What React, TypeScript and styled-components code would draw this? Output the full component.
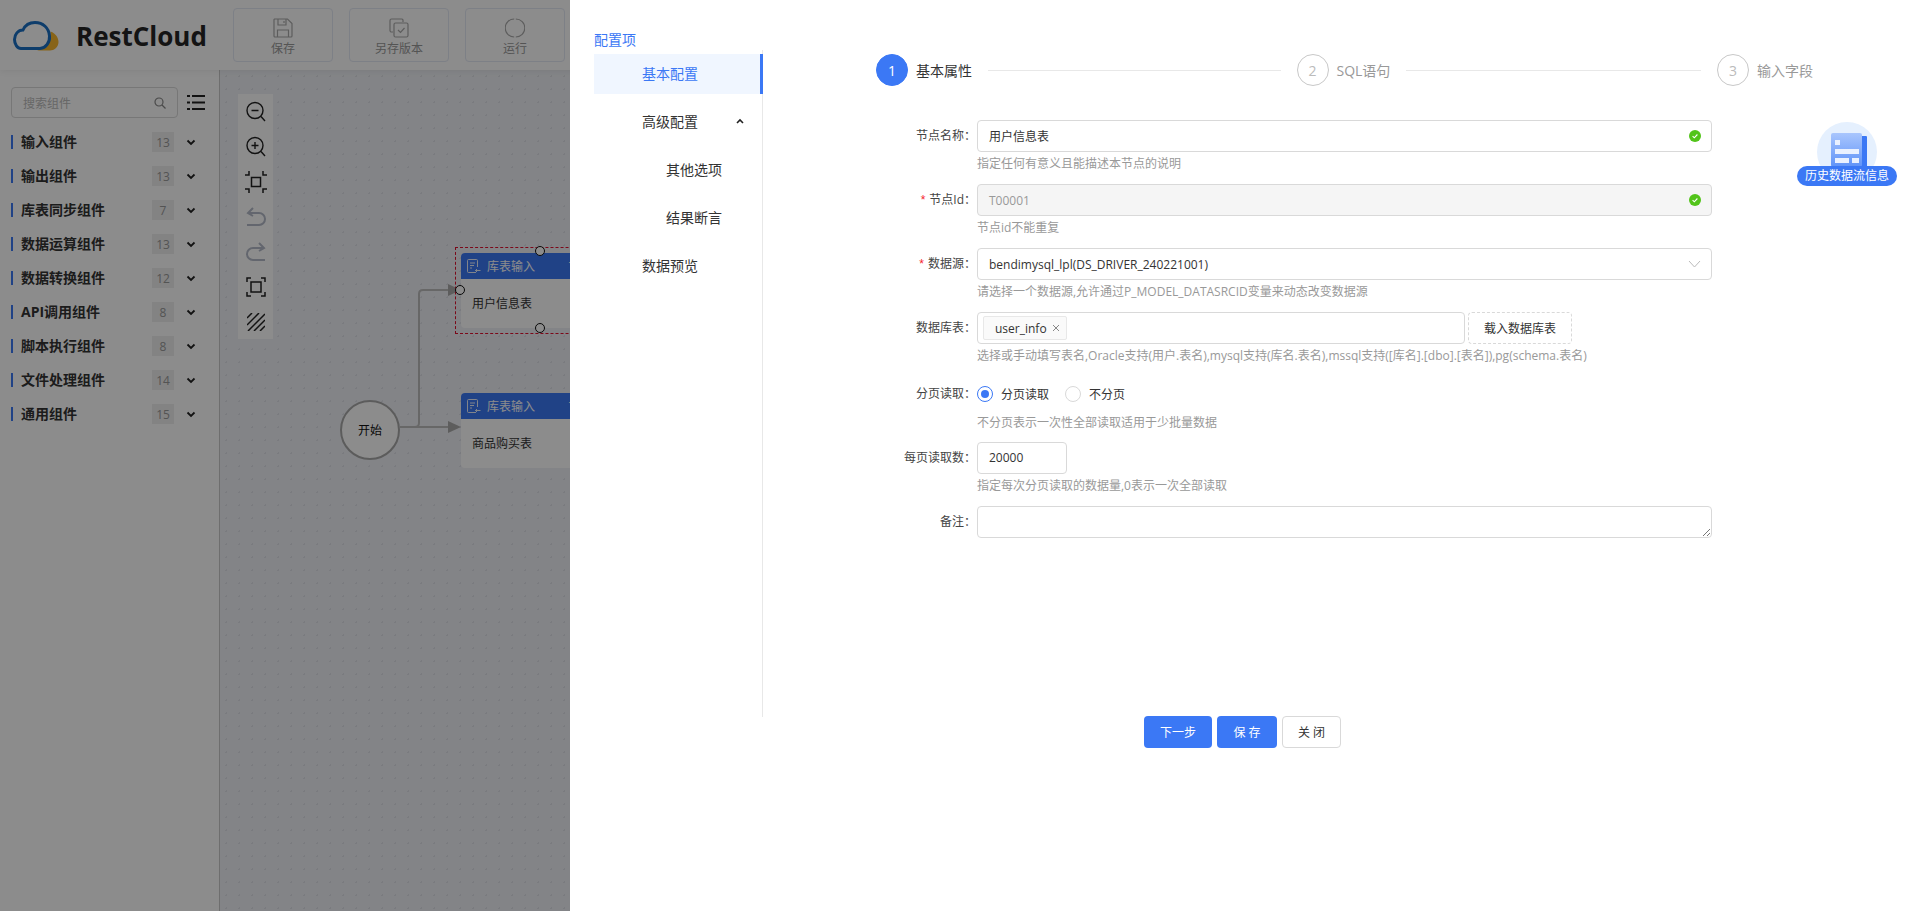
import React from "react";
import styled, { createGlobalStyle } from "styled-components";

const GlobalStyle = createGlobalStyle`
  html, body {
    margin: 0;
    padding: 0;
    height: 100%;
    overflow: hidden;
  }
  body {
    font-family: "Open Sans", "Noto Sans CJK SC", sans-serif;
    font-size: 12px;
    color: #333;
  }
  * {
    box-sizing: border-box;
  }
`;

const groups = [
  { name: "输入组件", count: 13 },
  { name: "输出组件", count: 13 },
  { name: "库表同步组件", count: 7 },
  { name: "数据运算组件", count: 13 },
  { name: "数据转换组件", count: 12 },
  { name: "API调用组件", count: 8 },
  { name: "脚本执行组件", count: 8 },
  { name: "文件处理组件", count: 14 },
  { name: "通用组件", count: 15 },
];

const Logo = () => (
  <svg width="46" height="30" viewBox="0 0 46 30" fill="none">
    <path d="M37.5 10.5C43 12.5 45.5 17 45.5 21C45.5 26 41 29.5 37 29.5H24C32 28 38.5 21 37.5 10.5Z" fill="#f7b62c" />
    <path
      d="M8 27.5H27C33 27 37 21 36.5 15C36 7 30 1.5 22 1.5C16 1.5 12 4.5 10 9C5 9 1.5 13.5 1.5 18.5C1.5 23.5 4.5 27.5 8 27.5Z"
      stroke="#1a6fc4"
      strokeWidth="3"
    />
  </svg>
);

const SaveIcon = () => (
  <svg width="20" height="20" viewBox="0 0 20 20" fill="none" stroke="#aaa" strokeWidth="1.2">
    <path d="M1.5 1H14.5L19 5.5V18A1 1 0 0 1 18 19H2A1 1 0 0 1 1 18V1.5Z" />
    <path d="M5 1V7H13V1M11 3V5M4.5 19V12H15.5V19" />
  </svg>
);

const CopyIcon = () => (
  <svg width="20" height="20" viewBox="0 0 20 20" fill="none" stroke="#aaa" strokeWidth="1.2">
    <path d="M14 4V2A1.5 1.5 0 0 0 12.5 1H2.5A1.5 1.5 0 0 0 1 2.5V12.5A1.5 1.5 0 0 0 2.5 14H4" />
    <rect x="5" y="5" width="14" height="14" rx="1.5" />
    <path d="M9 12L11.5 14.5L15.5 10" />
  </svg>
);

const RunIcon = () => (
  <svg width="20" height="20" viewBox="0 0 20 20" fill="none" stroke="#aaa" strokeWidth="1.2">
    <path d="M10.8 1A9 9 0 0 1 10.8 19M9.2 19A9 9 0 0 1 9.2 1" />
  </svg>
);

const ToolIcon = ({ name }: { name: string }) => {
  if (name === "zoomOut" || name === "zoomIn") {
    return (
      <svg width="20" height="21" viewBox="0 0 20 21" fill="none" stroke="#222" strokeWidth="1.4">
        <circle cx="9" cy="9.5" r="8" />
        <path d="M5.5 9.5H12.5M15 15.5L19 20" />
        {name === "zoomIn" && <path d="M9 6V13" />}
      </svg>
    );
  }
  if (name === "fit") {
    return (
      <svg width="22" height="22" viewBox="0 0 22 22" fill="none" stroke="#222" strokeWidth="1.5">
        <rect x="6.5" y="6.5" width="9" height="9" />
        <path d="M4 0V4H0M18 0V4H22M4 22V18H0M18 22V18H22" />
      </svg>
    );
  }
  if (name === "undo") {
    return (
      <svg width="20" height="20" viewBox="0 0 20 20" fill="none" stroke="#b4bac8" strokeWidth="2">
        <path d="M3 6H13A5.5 5.5 0 0 1 13 18H1" />
        <path d="M7 1L2 6L7 9" />
      </svg>
    );
  }
  if (name === "redo") {
    return (
      <svg width="20" height="20" viewBox="0 0 20 20" fill="none" stroke="#b4bac8" strokeWidth="2">
        <path d="M17 6H7A5.5 5.5 0 0 0 7 18H19" />
        <path d="M13 1L18 6L13 9" />
      </svg>
    );
  }
  if (name === "screen") {
    return (
      <svg width="20" height="20" viewBox="0 0 20 20" fill="none" stroke="#222" strokeWidth="1.5">
        <rect x="5" y="5" width="10" height="10" />
        <path d="M1 5V1H5M15 1H19V5M1 15V19H5M15 19H19V15" />
      </svg>
    );
  }
  return (
    <svg width="18" height="18" viewBox="0 0 18 18" fill="none" stroke="#222" strokeWidth="1.5">
      <path d="M0 5L5 0M0 12L12 0M1 18L18 1M7 18L18 7M13 18L18 13" />
    </svg>
  );
};

const NodeIcon = () => (
  <svg width="14" height="15" viewBox="0 0 14 15" fill="none" stroke="#fff" strokeWidth="0.9">
    <path d="M9 13.5H1.5A1 1 0 0 1 .5 12.5V1.5A1 1 0 0 1 1.5 .5H9.5A1 1 0 0 1 10.5 1.5V8" />
    <path d="M3 4H8M3 6.5H7M3 9H5M13.5 11.5H8.5M10 10L8.5 11.5L10 13" />
  </svg>
);

const Check = () => (
  <svg width="12" height="12" viewBox="0 0 12 12">
    <circle cx="6" cy="6" r="6" fill="#52c41a" />
    <path d="M3.6 6.1L5.3 7.8L8.4 4.5" fill="none" stroke="#fff" strokeWidth="1.1" />
  </svg>
);

const HistoryIcon = () => (
  <svg width="36" height="34" viewBox="0 0 36 34">
    <defs>
      <linearGradient id="docFill" x1="0" y1="0" x2="0" y2="1">
        <stop offset="0" stopColor="#a9c6fd" />
        <stop offset="1" stopColor="#5f93f8" />
      </linearGradient>
    </defs>
    <rect x="26" y="3" width="10" height="31" rx="1" fill="#3b78f5" />
    <rect x="0" y="0" width="31" height="34" rx="2" fill="url(#docFill)" />
    <rect x="4" y="7" width="5" height="5" fill="#eaf1ff" />
    <rect x="4" y="16" width="24" height="5" fill="#eaf1ff" />
    <rect x="4" y="25" width="14" height="5" fill="#eaf1ff" />
    <rect x="21" y="25" width="7" height="5" fill="#eaf1ff" />
  </svg>
);

const App: React.FC = () => {
  return (
    <Page>
      <GlobalStyle />
      <Header>
        <Brand>
          <Logo />
          <BrandName>RestCloud</BrandName>
        </Brand>
        <ToolButton>
          <SaveIcon />
          保存
        </ToolButton>
        <ToolButton>
          <CopyIcon />
          另存版本
        </ToolButton>
        <ToolButton>
          <RunIcon />
          运行
        </ToolButton>
      </Header>

      <Body>
        <Sidebar>
          <SearchRow>
            <SearchBox>
              <span>搜索组件</span>
              <svg width="12" height="12" viewBox="0 0 12 12" fill="none" stroke="#888" strokeWidth="1.2">
                <circle cx="5" cy="5" r="4" />
                <path d="M8 8L11.5 11.5" />
              </svg>
            </SearchBox>
            <svg width="18" height="17" viewBox="0 0 18 17" fill="#222">
              <rect x="0" y="1" width="3" height="2" />
              <rect x="5" y="1" width="13" height="2" />
              <rect x="0" y="7.5" width="3" height="2" />
              <rect x="5" y="7.5" width="13" height="2" />
              <rect x="0" y="14" width="3" height="2" />
              <rect x="5" y="14" width="13" height="2" />
            </svg>
          </SearchRow>
          {groups.map((g) => (
            <GroupRow key={g.name}>
              <GroupName>{g.name}</GroupName>
              <Badge>{g.count}</Badge>
              <svg width="10" height="7" viewBox="0 0 10 7" fill="none" stroke="#222" strokeWidth="1.8">
                <path d="M1.5 1.5L5 5L8.5 1.5" />
              </svg>
            </GroupRow>
          ))}
        </Sidebar>

        <Canvas>
          <ToolStrip>
            {["zoomOut", "zoomIn", "fit", "undo", "redo", "screen", "hatch"].map((n) => (
              <ToolCell key={n}>
                <ToolIcon name={n} />
              </ToolCell>
            ))}
          </ToolStrip>

          <Edges width="300" height="420" viewBox="0 0 300 420" fill="none">
            <path d="M180 357H228" stroke="#bcbcbc" strokeWidth="2" />
            <path d="M180 357H195Q199 357 199 353V224Q199 220 203 220H228" stroke="#bcbcbc" strokeWidth="2" />
            <path d="M228 214L241 220L228 226Z" fill="#aaa" />
            <path d="M228 351L241 357L228 363Z" fill="#aaa" />
          </Edges>

          <StartNode>开始</StartNode>

          <Selection />
          <FlowNode $top={183}>
            <NodeHead>
              <NodeIcon />
              <span>库表输入</span>
              <NodeCode>T00001</NodeCode>
            </NodeHead>
            <NodeBody>用户信息表</NodeBody>
          </FlowNode>
          <FlowNode $top={323}>
            <NodeHead>
              <NodeIcon />
              <span>库表输入</span>
              <NodeCode>T00002</NodeCode>
            </NodeHead>
            <NodeBody>商品购买表</NodeBody>
          </FlowNode>
          <Handle $left={315} $top={176} />
          <Handle $left={235} $top={215} />
          <Handle $left={315} $top={253} />
        </Canvas>
      </Body>

      <Mask />

      <Drawer>
        <DrawerMain>
          <NavColumn>
            <NavCaption>配置项</NavCaption>
            <NavList>
              <NavItem $active>基本配置</NavItem>
              <NavItem>
                高级配置
                <NavCaret width="8" height="6" viewBox="0 0 8 6" fill="none" stroke="#222" strokeWidth="1.6">
                  <path d="M1 5L4 2L7 5" />
                </NavCaret>
              </NavItem>
              <NavItem $sub>其他选项</NavItem>
              <NavItem $sub>结果断言</NavItem>
              <NavItem>数据预览</NavItem>
            </NavList>
          </NavColumn>

          <FormColumn>
            <Steps>
              <Step>
                <StepDot $active>1</StepDot>
                <StepTitle $active>基本属性</StepTitle>
                <StepLine />
              </Step>
              <Step>
                <StepDot>2</StepDot>
                <StepTitle>SQL语句</StepTitle>
                <StepLine />
              </Step>
              <Step $last>
                <StepDot>3</StepDot>
                <StepTitle>输入字段</StepTitle>
              </Step>
            </Steps>

            <Form>
              <FormRow>
                <Label>节点名称：</Label>
                <Field>
                  <Input>
                    用户信息表
                    <Check />
                  </Input>
                  <Hint>指定任何有意义且能描述本节点的说明</Hint>
                </Field>
              </FormRow>
              <FormRow>
                <Label>
                  <Star>*</Star>节点Id：
                </Label>
                <Field>
                  <Input $disabled>
                    T00001
                    <Check />
                  </Input>
                  <Hint>节点id不能重复</Hint>
                </Field>
              </FormRow>
              <FormRow>
                <Label>
                  <Star>*</Star>数据源：
                </Label>
                <Field>
                  <Input>
                    bendimysql_lpl(DS_DRIVER_240221001)
                    <svg width="13" height="8" viewBox="0 0 13 8" fill="none" stroke="#bbb" strokeWidth="1">
                      <path d="M1 1L6.5 7L12 1" />
                    </svg>
                  </Input>
                  <Hint>请选择一个数据源,允许通过P_MODEL_DATASRCID变量来动态改变数据源</Hint>
                </Field>
              </FormRow>
              <FormRow>
                <Label>数据库表：</Label>
                <Field>
                  <TableRow>
                    <TagInput>
                      <Tag>
                        user_info
                        <svg width="8" height="8" viewBox="0 0 8 8" fill="none" stroke="#888" strokeWidth="1">
                          <path d="M1 1L7 7M7 1L1 7" />
                        </svg>
                      </Tag>
                    </TagInput>
                    <DashedButton>载入数据库表</DashedButton>
                  </TableRow>
                  <Hint>选择或手动填写表名,Oracle支持(用户.表名),mysql支持(库名.表名),mssql支持([库名].[dbo].[表名]),pg(schema.表名)</Hint>
                </Field>
              </FormRow>
              <FormRow $tall>
                <Label $radio>分页读取：</Label>
                <Field>
                  <RadioGroup>
                    <RadioItem>
                      <Radio $checked />
                      分页读取
                    </RadioItem>
                    <RadioItem>
                      <Radio />
                      不分页
                    </RadioItem>
                  </RadioGroup>
                  <Hint>不分页表示一次性全部读取适用于少批量数据</Hint>
                </Field>
              </FormRow>
              <FormRow>
                <Label>每页读取数：</Label>
                <Field>
                  <NumberInput>20000</NumberInput>
                  <Hint>指定每次分页读取的数据量,0表示一次全部读取</Hint>
                </Field>
              </FormRow>
              <FormRow>
                <Label>备注：</Label>
                <Field>
                  <Remark>
                    <svg width="8" height="8" viewBox="0 0 8 8" fill="none" stroke="#777" strokeWidth="1">
                      <path d="M1 8L8 1M5 8L8 5" />
                    </svg>
                  </Remark>
                </Field>
              </FormRow>
            </Form>
          </FormColumn>
        </DrawerMain>

        <Footer>
          <PrimaryBtn>下一步</PrimaryBtn>
          <PrimaryBtn $narrow>保 存</PrimaryBtn>
          <CloseBtn>关 闭</CloseBtn>
        </Footer>

        <HistoryWidget>
          <HistoryDisc>
            <HistoryIcon />
          </HistoryDisc>
          <HistoryPill>历史数据流信息</HistoryPill>
        </HistoryWidget>
      </Drawer>
    </Page>
  );
};

const Page = styled.div`
  position: relative;
  width: 1920px;
  height: 911px;
  overflow: hidden;
  display: flex;
  flex-direction: column;
  background: #fff;
`;
const Header = styled.header`
  height: 70px;
  flex: none;
  display: flex;
  align-items: flex-start;
  gap: 16px;
  padding: 8px 0 0 13px;
  background: #fff;
  box-shadow: 0 2px 6px rgba(0, 0, 0, 0.06);
  position: relative;
  z-index: 1;
`;
const Brand = styled.div`
  width: 204px;
  height: 54px;
  display: flex;
  align-items: center;
  gap: 17px;
  padding-top: 1px;
`;
const BrandName = styled.div`
  font-family: "Open Sans", sans-serif;
  font-size: 26px;
  font-weight: 700;
  line-height: 1;
  color: #262626;
`;
const ToolButton = styled.div`
  width: 100px;
  height: 54px;
  border: 1px solid #e3e9f4;
  border-radius: 4px;
  display: flex;
  flex-direction: column;
  align-items: center;
  padding-top: 9px;
  gap: 1px;
  line-height: 20px;
  font-size: 12px;
  color: #999;
`;
const Body = styled.div`
  flex: 1;
  display: flex;
  min-height: 0;
`;
const Sidebar = styled.aside`
  width: 220px;
  flex: none;
  padding: 17px 0 0 11px;
  border-right: 1px solid #c8c8c8;
  background: #fff;
`;
const SearchRow = styled.div`
  display: flex;
  align-items: center;
  gap: 9px;
  margin-bottom: 7px;
`;
const SearchBox = styled.div`
  width: 167px;
  height: 31px;
  border: 1px solid #d9d9d9;
  border-radius: 4px;
  padding: 0 11px;
  display: flex;
  align-items: center;
  justify-content: space-between;
  color: #bbb;
  font-size: 12px;
`;
const GroupRow = styled.div`
  height: 34px;
  display: flex;
  align-items: center;
  padding-right: 23px;
`;
const GroupName = styled.div`
  flex: 1;
  font-size: 14px;
  font-weight: 700;
  color: #333;
  border-left: 2px solid #3b78f5;
  padding-left: 8px;
  line-height: 14px;
`;
const Badge = styled.div`
  width: 22px;
  height: 20px;
  background: #eee;
  color: #999;
  font-size: 12px;
  display: flex;
  align-items: center;
  justify-content: center;
  margin-right: 12px;
`;
const Canvas = styled.main`
  position: relative;
  flex: 1;
  background-color: #eff1f6;
  background-image: radial-gradient(#dfe1e7 1px, transparent 1px);
  background-size: 13px 13px;
`;
const ToolStrip = styled.div`
  position: absolute;
  left: 18px;
  top: 24px;
  width: 35px;
  height: 245px;
  background: #fff;
  display: flex;
  flex-direction: column;
`;
const ToolCell = styled.div`
  height: 35px;
  display: flex;
  align-items: center;
  justify-content: center;
`;
const Edges = styled.svg`
  position: absolute;
  left: 0;
  top: 0;
`;
const StartNode = styled.div`
  position: absolute;
  left: 120px;
  top: 330px;
  width: 60px;
  height: 60px;
  border-radius: 50%;
  border: 2px solid #a8a8a8;
  background: #fff;
  display: flex;
  align-items: center;
  justify-content: center;
  font-size: 12px;
  color: #111;
`;
const Selection = styled.div`
  position: absolute;
  left: 235px;
  top: 177px;
  width: 400px;
  height: 87px;
  border: 1px dashed #e00f2e;
`;
const FlowNode = styled.div<{ $top: number }>`
  position: absolute;
  left: 241px;
  top: ${(p) => p.$top}px;
  width: 180px;
  height: 75px;
  background: #fff;
  border-radius: 4px;
  overflow: hidden;
`;
const NodeHead = styled.div`
  height: 26px;
  display: flex;
  align-items: center;
  gap: 6px;
  padding-left: 6px;
  background: #3b78f5;
  color: #fff;
  font-size: 12px;
`;
const NodeCode = styled.span`
  margin-left: 28px;
`;
const NodeBody = styled.div`
  padding: 16px 11px;
  font-size: 12px;
  line-height: 18px;
  color: #333;
`;
const Handle = styled.div<{ $left: number; $top: number }>`
  position: absolute;
  left: ${(p) => p.$left}px;
  top: ${(p) => p.$top}px;
  width: 10px;
  height: 10px;
  border-radius: 50%;
  border: 1.5px solid #111;
  background: #fff;
`;
const Mask = styled.div`
  position: absolute;
  inset: 0;
  background: rgba(0, 0, 0, 0.45);
  z-index: 5;
`;
const Drawer = styled.section`
  position: absolute;
  left: 570px;
  top: 0;
  right: 0;
  bottom: 0;
  z-index: 6;
  background: #fff;
  padding: 30px 0 0 24px;
  display: flex;
  flex-direction: column;
`;
const DrawerMain = styled.div`
  height: 687px;
  margin-bottom: -1px;
  display: flex;
`;
const NavColumn = styled.div`
  width: 169px;
  flex: none;
  display: flex;
  flex-direction: column;
`;
const NavCaption = styled.div`
  height: 20px;
  line-height: 20px;
  font-size: 14px;
  color: #3b78f5;
`;
const NavList = styled.div`
  flex: 1;
  border-right: 1px solid #e8e8e8;
  padding-top: 4px;
  display: flex;
  flex-direction: column;
  gap: 8px;
`;
const NavItem = styled.div<{ $active?: boolean; $sub?: boolean }>`
  position: relative;
  height: 40px;
  line-height: 40px;
  padding-left: ${(p) => (p.$sub ? 72 : 48)}px;
  font-size: 14px;
  color: ${(p) => (p.$active ? "#3b78f5" : "#333")};
  background: ${(p) => (p.$active ? "#f0f6ff" : "transparent")};
  border-right: ${(p) => (p.$active ? "3px solid #3b78f5" : "none")};
  margin-right: ${(p) => (p.$active ? "-1px" : "0")};
`;
const NavCaret = styled.svg`
  position: absolute;
  left: 142px;
  top: 16px;
`;
const FormColumn = styled.div`
  flex: 1;
  padding: 24px 0 0 113px;
`;
const Steps = styled.div`
  width: 937px;
  display: flex;
  gap: 16px;
`;
const Step = styled.div<{ $last?: boolean }>`
  flex: ${(p) => (p.$last ? "none" : "1")};
  display: flex;
  align-items: center;
  height: 32px;
`;
const StepDot = styled.div<{ $active?: boolean }>`
  width: 32px;
  height: 32px;
  border-radius: 50%;
  flex: none;
  display: flex;
  align-items: center;
  justify-content: center;
  font-size: 14px;
  color: ${(p) => (p.$active ? "#fff" : "#bbb")};
  background: ${(p) => (p.$active ? "#3b78f5" : "#fff")};
  border: 1px solid ${(p) => (p.$active ? "#3b78f5" : "#c8c8c8")};
`;
const StepTitle = styled.div<{ $active?: boolean }>`
  margin-left: 8px;
  font-size: 14px;
  white-space: nowrap;
  color: ${(p) => (p.$active ? "#333" : "#999")};
`;
const StepLine = styled.div`
  flex: 1;
  height: 1px;
  margin-left: 16px;
  background: #e8e8e8;
`;
const Form = styled.div`
  width: 842px;
  margin: 34px 0 0 -6px;
`;
const FormRow = styled.div<{ $tall?: boolean }>`
  display: flex;
  height: ${(p) => (p.$tall ? 66 : 64)}px;
`;
const Label = styled.div<{ $radio?: boolean }>`
  width: 107px;
  flex: none;
  padding-right: 1px;
  text-align: right;
  font-size: 12px;
  line-height: ${(p) => (p.$radio ? 36 : 32)}px;
  color: #444;
  white-space: nowrap;
`;
const Star = styled.span`
  color: #f5222d;
  margin-right: 4px;
  font-family: "Liberation Sans", sans-serif;
`;
const Field = styled.div`
  flex: 1;
  min-width: 0;
`;
const Input = styled.div<{ $disabled?: boolean }>`
  height: 32px;
  border: 1px solid #d9d9d9;
  border-radius: 4px;
  padding: 0 10px 0 11px;
  display: flex;
  align-items: center;
  justify-content: space-between;
  font-size: 12px;
  background: ${(p) => (p.$disabled ? "#f5f5f5" : "#fff")};
  color: ${(p) => (p.$disabled ? "#999" : "#333")};
`;
const Hint = styled.div`
  height: 20px;
  line-height: 24px;
  font-size: 12px;
  color: #999;
  white-space: nowrap;
`;
const TableRow = styled.div`
  display: flex;
  gap: 3px;
`;
const TagInput = styled.div`
  width: 488px;
  height: 32px;
  border: 1px solid #d9d9d9;
  border-radius: 4px;
  padding: 3px 5px;
`;
const Tag = styled.div`
  width: 84px;
  height: 24px;
  border: 1px solid #e8e8e8;
  border-radius: 2px;
  background: #fafafa;
  padding: 0 6px 0 11px;
  display: flex;
  align-items: center;
  justify-content: space-between;
  font-size: 12px;
  color: #333;
`;
const DashedButton = styled.div`
  width: 104px;
  height: 32px;
  border: 1px dashed #d9d9d9;
  border-radius: 4px;
  display: flex;
  align-items: center;
  justify-content: center;
  font-size: 12px;
  color: #333;
`;
const RadioGroup = styled.div`
  height: 35px;
  display: flex;
  align-items: center;
  gap: 16px;
`;
const RadioItem = styled.div`
  display: flex;
  align-items: center;
  gap: 8px;
  font-size: 12px;
  color: #333;
`;
const Radio = styled.span<{ $checked?: boolean }>`
  width: 16px;
  height: 16px;
  border-radius: 50%;
  border: 1px solid ${(p) => (p.$checked ? "#3b78f5" : "#d9d9d9")};
  display: flex;
  align-items: center;
  justify-content: center;
  &::after {
    content: "";
    width: 8px;
    height: 8px;
    border-radius: 50%;
    background: ${(p) => (p.$checked ? "#3b78f5" : "transparent")};
  }
`;
const NumberInput = styled.div`
  width: 90px;
  height: 32px;
  border: 1px solid #d9d9d9;
  border-radius: 4px;
  padding-left: 11px;
  line-height: 30px;
  font-size: 12px;
  color: #333;
`;
const Remark = styled.div`
  height: 32px;
  border: 1px solid #d9d9d9;
  border-radius: 4px;
  display: flex;
  align-items: flex-end;
  justify-content: flex-end;
  padding: 0 1px 1px 0;
`;
const Footer = styled.div`
  display: flex;
  justify-content: center;
  gap: 5px;
  padding-right: 29px;
`;
const PrimaryBtn = styled.div<{ $narrow?: boolean }>`
  width: ${(p) => (p.$narrow ? 60 : 68)}px;
  height: 32px;
  border-radius: 4px;
  background: #3b78f5;
  color: #fff;
  font-size: 12px;
  display: flex;
  align-items: center;
  justify-content: center;
`;
const CloseBtn = styled.div`
  width: 59px;
  height: 32px;
  border-radius: 4px;
  border: 1px solid #d9d9d9;
  color: #333;
  font-size: 12px;
  display: flex;
  align-items: center;
  justify-content: center;
`;
const HistoryWidget = styled.div`
  position: absolute;
  left: 1227px;
  top: 122px;
  width: 100px;
  height: 64px;
`;
const HistoryDisc = styled.div`
  position: absolute;
  left: 20px;
  top: 0;
  width: 60px;
  height: 60px;
  border-radius: 50%;
  background: #e5f0fe;
  display: flex;
  justify-content: center;
  padding: 11px 0 0 4px;
`;
const HistoryPill = styled.div`
  position: absolute;
  left: 0;
  top: 44px;
  width: 100px;
  height: 20px;
  border-radius: 10px;
  background: #3b78f5;
  color: #fff;
  font-size: 12px;
  line-height: 20px;
  text-align: center;
  white-space: nowrap;
`;

export default App;
